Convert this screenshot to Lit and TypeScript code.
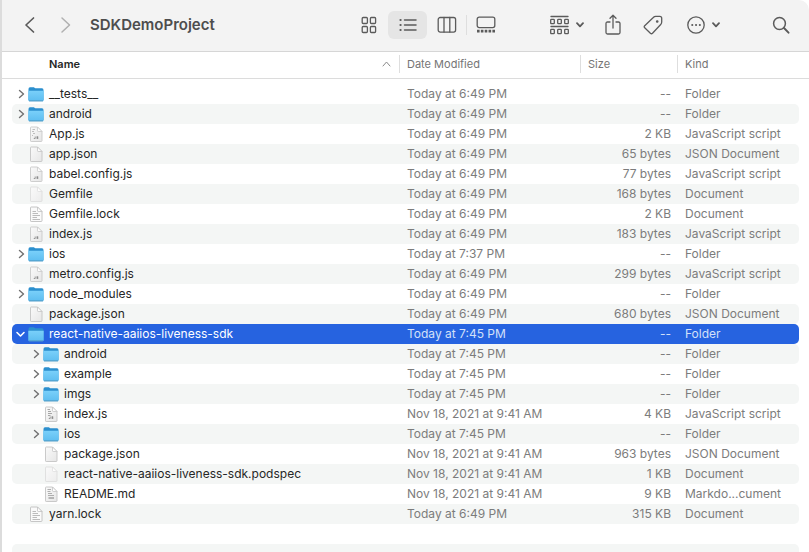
import { LitElement, html, svg, css } from "lit";
import { customElement, property } from "lit/decorators.js";
import { classMap } from "lit/directives/class-map.js";

type IconKind = "folder" | "script" | "scriptFull" | "scriptDense" | "json" | "blank" | "text" | "markdown";

interface Entry {
  name: string;
  icon: IconKind;
  date: string;
  size: string;
  kind: string;
  nested?: boolean;
  open?: boolean;
  selected?: boolean;
}

const AT_649 = "Today at 6:49 PM";
const AT_745 = "Today at 7:45 PM";
const NOV_18 = "Nov 18, 2021 at 9:41 AM";
const JS = "JavaScript script";
const JSON_DOC = "JSON Document";
const DOC = "Document";

const folder = (name: string, date: string, extra: Partial<Entry> = {}): Entry => ({
  name, icon: "folder", date, size: "--", kind: "Folder", ...extra,
});
const file = (name: string, icon: IconKind, date: string, size: string, kind: string, nested = false): Entry => ({
  name, icon, date, size, kind, nested,
});

const ENTRIES: Entry[] = [
  folder("__tests__", AT_649),
  folder("android", AT_649),
  file("App.js", "scriptFull", AT_649, "2 KB", JS),
  file("app.json", "json", AT_649, "65 bytes", JSON_DOC),
  file("babel.config.js", "script", AT_649, "77 bytes", JS),
  file("Gemfile", "blank", AT_649, "168 bytes", DOC),
  file("Gemfile.lock", "text", AT_649, "2 KB", DOC),
  file("index.js", "script", AT_649, "183 bytes", JS),
  folder("ios", "Today at 7:37 PM"),
  file("metro.config.js", "script", AT_649, "299 bytes", JS),
  folder("node_modules", AT_649),
  file("package.json", "json", AT_649, "680 bytes", JSON_DOC),
  folder("react-native-aaiios-liveness-sdk", AT_745, { open: true, selected: true }),
  folder("android", AT_745, { nested: true }),
  folder("example", AT_745, { nested: true }),
  folder("imgs", AT_745, { nested: true }),
  file("index.js", "scriptDense", NOV_18, "4 KB", JS, true),
  folder("ios", AT_745, { nested: true }),
  file("package.json", "json", NOV_18, "963 bytes", JSON_DOC, true),
  file("react-native-aaiios-liveness-sdk.podspec", "blank", NOV_18, "1 KB", DOC, true),
  file("README.md", "markdown", NOV_18, "9 KB", "Markdo...cument", true),
  file("yarn.lock", "text", AT_649, "315 KB", DOC),
];

/* A sheet with a folded corner and a light shade towards its foot. */
const page = (stroke: string, foot = "#e6e6e6") => svg`
  <defs>
    <linearGradient id="sheet" x1="0" y1="0" x2="1" y2="1">
      <stop offset="0" stop-color="#fafafa"/><stop offset="1" stop-color=${foot}/>
    </linearGradient>
  </defs>
  <path d="M3.2 1H9.5L14 5.5V14.8Q14 15.5 13.3 15.5H3.2Q2.5 15.5 2.5 14.8V1.7Q2.5 1 3.2 1Z" fill="url(#sheet)" stroke=${stroke} stroke-width=".9"/>
  <path d="M9.5 1V4.800Q9.500 5.500 10.200 5.500H14Z" fill="#fdfdfd" stroke=${stroke} stroke-width=".8"/>`;

const jsMark = svg`<path d="M7.2 10.500V12.500H5.800M10.200 10.700H8.800V11.500H10V12.500H8.600" fill="none" stroke="#777" stroke-width=".7"/>`;

const ICONS: Record<IconKind, unknown> = {
  folder: svg`
    <defs>
      <linearGradient id="front" x1="0" y1="0" x2="0" y2="1">
        <stop offset="0" stop-color="#7ad0fa"/><stop offset="1" stop-color="#5dbdf0"/>
      </linearGradient>
    </defs>
    <path d="M.5 3Q.5 1.300 2 1.300H5.800L7.300 2.300H14Q15.500 2.300 15.500 4V14H.5Z" fill="#2b8fce"/>
    <path d="M.3 4.700H15.700V14Q15.700 15.200 14.600 15.200H1.400Q.3 15.200 .3 14Z" fill="url(#front)"/>
    <path d="M1 14.900H15" stroke="#4b8fb8" stroke-width=".8"/>`,
  script: svg`${page("#c9c9c9")}${jsMark}`,
  scriptFull: svg`${page("#c9c9c9")}
    <path d="M4.500 3.500H7M4 5.500H6M5 7.500H7M4 9.500H5" stroke="#b0b0b0" stroke-width=".8"/>${jsMark}`,
  scriptDense: svg`${page("#c4c4c4")}
    <path d="M4.500 3.500H7M5 5.500H8M5 7.500H9M5 9.500H7.500" stroke="#9d9d9d" stroke-width=".9"/>${jsMark}`,
  json: svg`${page("#c4c4c4")}`,
  blank: svg`${page("#dedede", "#ececec")}`,
  text: svg`${page("#c0c0c0", "#fafafa")}
    <path d="M4.500 5.500H8M4.500 7.500H10M4.500 9.500H12M4.500 11.500H9M4.500 13.500H12" stroke="#b4b4b4" stroke-width=".9"/>`,
  markdown: svg`${page("#c4c4c4")}
    <path d="M4.500 3.500H8M4.500 5.500H7.500M5 7.500H9M5 9.500H11" stroke="#a6a6a6" stroke-width=".9"/>
    <path d="M5.500 12H11" stroke="#7d7d7d"/>`,
};

@customElement("file-icon")
export class FileIcon extends LitElement {
  @property() kind: IconKind = "blank";

  static styles = css`
    :host { display: block; flex: none; width: 16px; height: 16px; }
    .glyph { display: block; }
  `;

  render() {
    return html`<svg class="glyph" width="16" height="16" viewBox="0 0 16 16" aria-hidden="true">${ICONS[this.kind]}</svg>`;
  }
}

const glyph = (w: number, h: number, body: unknown) =>
  html`<svg class="glyph" width=${w} height=${h} viewBox="0 0 ${w} ${h}" aria-hidden="true">${body}</svg>`;

const downMark = glyph(8, 6, svg`<path d="M1 1.200L4 4.400L7 1.200" stroke-width="1.800"/>`);
const boxes = (y: number) => [0, 7, 14].map((x) => svg`<rect x=${x + 0.7} y=${y} width="3.600" height="4.400" rx=".8"/>`);

@customElement("app-root")
export class AppRoot extends LitElement {
  static styles = css`
    :host {
      display: flex;
      flex-direction: column;
      box-sizing: border-box;
      height: 100vh;
      overflow: hidden;
      border-left: 2px solid #dcdcdc;
      border-top-right-radius: 10px;
      background: #fff;
      color: #262626;
      font: 12px/20px Inter, "Liberation Sans", sans-serif;
    }
    button {
      appearance: none;
      border: 0;
      padding: 0;
      margin: 0;
      background: none;
      font: inherit;
      color: inherit;
    }
    .glyph {
      display: block;
      flex: none;
      fill: none;
      stroke: currentColor;
      stroke-width: 1.3;
      stroke-linecap: round;
      stroke-linejoin: round;
    }
    .toolbar {
      display: flex;
      align-items: center;
      flex: none;
      box-sizing: border-box;
      height: 52px;
      padding: 0 10px 2px 10px;
      border-bottom: 1px solid #d6d6d6;
      background: #f3f3f3;
      color: #5b5b5b;
    }
    .tool {
      display: flex;
      align-items: center;
      justify-content: center;
      gap: 7px;
      flex: none;
      width: 36px;
      height: 28px;
      border-radius: 6px;
    }
    .tool.faded { color: #b0b0b0; }
    .title {
      flex: 1;
      margin: 0 0 0 6px;
      font-size: 15px;
      font-weight: 600;
      color: #4d4d4d;
    }
    .group { display: flex; }
    .group .tool { width: 39px; }
    .group .tool.on { background: #e5e5e5; }
    .group .last { position: relative; }
    .group .last::before {
      content: "";
      position: absolute;
      left: 0;
      top: 4px;
      width: 1px;
      height: 20px;
      background: #dedede;
    }
    .actions { display: flex; margin: 0 32px 0 38px; gap: 4px; }
    .actions .wide { width: 48px; }
    .actions .more { margin: 0 4px; }
    .list {
      width: 100%;
      flex: none;
      border-collapse: separate;
      border-spacing: 0;
      table-layout: fixed;
    }
    .gutter { width: 10px; }
    .date { width: 181px; }
    .size { width: 97px; }
    .kind { width: 122px; }
    th {
      height: 24px;
      padding: 0 0 2px;
      border-bottom: 1px solid #dcdcdc;
      font-size: 11px;
      line-height: 18px;
      font-weight: 400;
      text-align: left;
      color: #757575;
    }
    .sort {
      display: flex;
      align-items: center;
      justify-content: space-between;
      width: 100%;
      padding: 0 8px 0 7px;
    }
    .ruled .sort { border-left: 1px solid #dedede; }
    .primary .sort { padding-left: 37px; font-weight: 600; color: #262626; }
    .primary .glyph { color: #8a8a8a; stroke-width: 1; }
    tbody::before { content: ""; display: block; height: 5px; }
    td {
      height: 20px;
      padding: 0 0 0 8px;
      white-space: nowrap;
      color: #7c7c7c;
    }
    .name-cell { padding: 0; border-radius: 5px 0 0 5px; }
    .size-cell { padding: 0 6px 0 0; text-align: right; }
    .kind-cell { border-radius: 0 5px 5px 0; }
    tr:nth-child(even) .fill { background: #f4f6f5; }
    tr.selected .fill { background: #2663e0; color: #d3e0f9; }
    .name { display: flex; align-items: center; color: #262626; }
    .name.nested { padding-left: 15px; }
    .selected .name { color: #fff; }
    .twist {
      display: flex;
      align-items: center;
      justify-content: center;
      flex: none;
      width: 16px;
      height: 20px;
      color: #707070;
    }
    .selected .twist { color: #fff; }
    .label { margin-left: 5px; }
  `;

  private row(e: Entry) {
    const mark = e.open
      ? glyph(12, 10, svg`<path d="M3 3.500L6.500 7L10 3.500" stroke-width="1.600"/>`)
      : glyph(12, 10, svg`<path d="M5.500 1.500L9.500 5L5.500 8.500" stroke-width="1.400"/>`);
    return html`
      <tr class=${classMap({ selected: !!e.selected })}>
        <td></td>
        <td class="fill name-cell">
          <div class=${classMap({ name: true, nested: !!e.nested })}>
            ${e.icon === "folder"
              ? html`<button class="twist" aria-label=${`Toggle ${e.name}`} aria-expanded=${e.open ? "true" : "false"}>${mark}</button>`
              : html`<span class="twist"></span>`}
            <file-icon .kind=${e.icon}></file-icon>
            <span class="label">${e.name}</span>
          </div>
        </td>
        <td class="fill">${e.date}</td>
        <td class="fill size-cell">${e.size}</td>
        <td class="fill kind-cell">${e.kind}</td>
        <td></td>
      </tr>`;
  }

  private emptyRow() {
    return html`
      <tr>
        <td></td>
        <td class="fill name-cell"></td>
        <td class="fill"></td>
        <td class="fill"></td>
        <td class="fill kind-cell"></td>
        <td></td>
      </tr>`;
  }

  render() {
    return html`
      <header class="toolbar">
        <button class="tool" aria-label="Back">${glyph(12, 18, svg`<path d="M9.500 2L2 9L9.500 16" stroke-width="1.700"/>`)}</button>
        <button class="tool faded" aria-label="Forward">${glyph(12, 18, svg`<path d="M2 2L9.500 9L2 16" stroke-width="1.500"/>`)}</button>
        <h1 class="title">SDKDemoProject</h1>
        <div class="group" role="group" aria-label="View">
          <button class="tool" aria-label="Icons">
            ${glyph(16, 18, svg`<rect x="1.200" y="1.500" width="5.200" height="6" rx="1"/><rect x="9.400" y="1.500" width="5.200" height="6" rx="1"/><rect x="1.200" y="10.500" width="5.200" height="6" rx="1"/><rect x="9.400" y="10.500" width="5.200" height="6" rx="1"/>`)}
          </button>
          <button class="tool on" aria-label="List" aria-pressed="true">
            ${glyph(18, 14, svg`<path d="M5.500 2H17M5.500 7H17M5.500 12H17" stroke-width="1.500"/><path d="M1.500 2H1.600M1.500 7H1.600M1.500 12H1.600" stroke-width="2.200"/>`)}
          </button>
          <button class="tool" aria-label="Columns">
            ${glyph(20, 18, svg`<rect x="1.200" y="1.500" width="17.400" height="14.600" rx="2"/><path d="M7 1.500V16M12.800 1.500V16"/>`)}
          </button>
          <button class="tool last" aria-label="Gallery">
            ${glyph(20, 18, svg`<rect x="1.200" y="1.200" width="17.600" height="10.400" rx="2"/><path d="M1 15.200H19" stroke-width="2.800" stroke-dasharray="2.600 1.250" stroke-linecap="butt"/>`)}
          </button>
        </div>
        <div class="actions">
          <button class="tool wide" aria-label="Group items">
            ${glyph(19, 20, svg`<path d="M1 1.500H18M1 11.500H18"/>${boxes(4.3)}${boxes(14.3)}`)}${downMark}
          </button>
          <button class="tool" aria-label="Share">
            ${glyph(16, 22, svg`<path d="M5 8H2.500Q1 8 1 9.500V18.500Q1 20 2.500 20H13.500Q15 20 15 18.500V9.500Q15 8 13.500 8H11M8 14V1.500M5 4.300L8 1.300L11 4.300"/>`)}
          </button>
          <button class="tool" aria-label="Tags">
            ${glyph(20, 20, svg`<path d="M10.300 2.500Q11.300 1.300 12.800 1.300H16.800Q18.700 1.300 18.700 3.300V7Q18.700 8.500 17.700 9.500L9.500 18.200Q8.500 19.200 7.400 18.200L1.700 12.700Q.7 11.700 1.700 10.700Z"/><circle cx="14.200" cy="6.500" r=".7" fill="currentColor"/>`)}
          </button>
          <button class="tool wide more" aria-label="More">
            ${glyph(18, 18, svg`<circle cx="9" cy="9" r="8.200"/><path d="M5.200 9H5.300M9 9H9.100M12.800 9H12.900" stroke-width="2"/>`)}${downMark}
          </button>
        </div>
        <button class="tool" aria-label="Search">
          ${glyph(18, 18, svg`<circle cx="7.500" cy="7.500" r="5.900" stroke-width="1.500"/><path d="M12 12L16.500 16.700" stroke-width="1.900"/>`)}
        </button>
      </header>
      <table class="list">
        <thead>
          <tr>
            <th class="gutter"></th>
            <th class="primary" aria-sort="ascending">
              <button class="sort">Name ${glyph(9, 6, svg`<path d="M1 5L4.500 1L8 5"/>`)}</button>
            </th>
            <th class="date ruled"><button class="sort">Date Modified</button></th>
            <th class="size ruled"><button class="sort">Size</button></th>
            <th class="kind ruled"><button class="sort">Kind</button></th>
            <th class="gutter"></th>
          </tr>
        </thead>
        <tbody>
          ${ENTRIES.map((e) => this.row(e))}
          ${[0, 1].map(() => this.emptyRow())}
        </tbody>
      </table>`;
  }
}
